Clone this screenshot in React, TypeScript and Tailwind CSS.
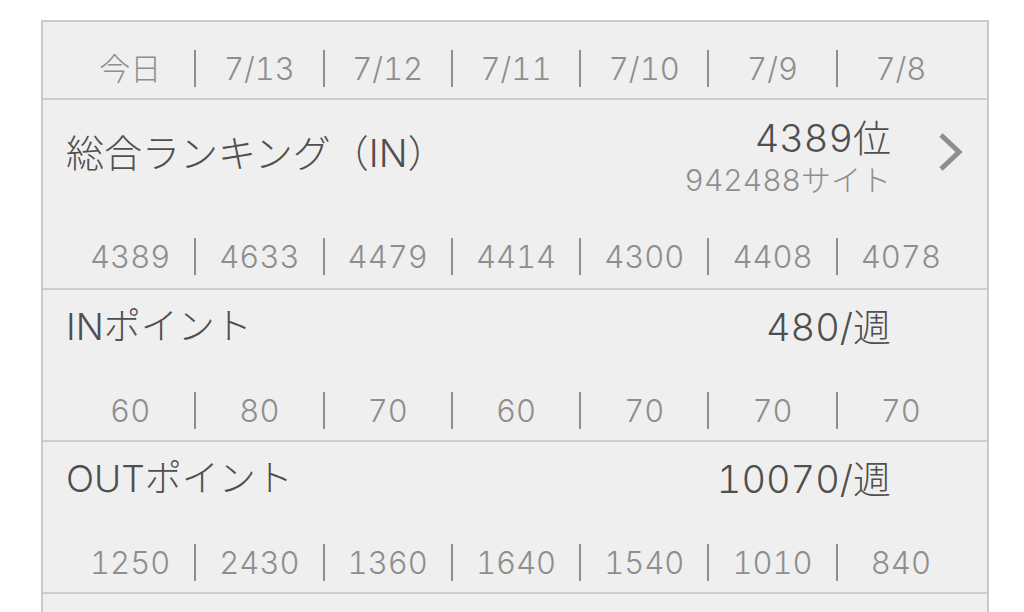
const dates = ['今日', '7/13', '7/12', '7/11', '7/10', '7/9', '7/8'];

const points = [
  {
    title: 'INポイント',
    value: '480/週',
    history: ['60', '80', '70', '60', '70', '70', '70'],
  },
  {
    title: 'OUTポイント',
    value: '10070/週',
    history: ['1250', '2430', '1360', '1640', '1540', '1010', '840'],
  },
];

const rankHistory = ['4389', '4633', '4479', '4414', '4300', '4408', '4078'];

function HistoryCells({ items }: { items: string[] }) {
  return (
    <div className="grid grid-cols-7 px-[23px]">
      {items.map((v, i) => (
        <div
          key={i}
          className={
            i > 0
              ? 'flex h-[37px] items-center justify-center border-l-2 border-[#8e8e8e] text-[31px] leading-none text-[#8e8e8e]'
              : 'flex h-[37px] items-center justify-center text-[31px] leading-none text-[#8e8e8e]'
          }
        >
          {v}
        </div>
      ))}
    </div>
  );
}

function Chevron() {
  return (
    <svg width="26" height="40" viewBox="0 0 26 40" className="block">
      <polyline
        points="4,3 22,20 4,37"
        fill="none"
        stroke="#8e8e8e"
        strokeWidth="5"
        strokeLinejoin="miter"
      />
    </svg>
  );
}

export default function App() {
  return (
    <div className="h-[612px] overflow-hidden bg-white pt-[20px] pl-[41px] font-[Inter,'Noto_Sans_CJK_JP',sans-serif] font-light tabular-nums">
      <div className="w-[948px] border-2 border-b-0 border-[#cacaca] bg-[#efefef]">
        {/* date header */}
        <div className="border-b-2 border-[#cdcdcd] pt-[28px] pb-[11px]">
          <HistoryCells items={dates} />
        </div>

        {/* overall ranking */}
        <div className="border-b-2 border-[#cdcdcd] pt-[18px] pb-[13px]">
          <div className="flex items-start pl-[23px] pr-[24px]">
            <div className="mt-[13px] flex-1 text-[38px] leading-[44px] text-[#4f4f4f]">
              総合ランキング（IN）
            </div>
            <div className="flex flex-col items-end">
              <div className="text-[38px] leading-[40px] text-[#4f4f4f]">4389位</div>
              <div className="text-[30px] leading-[44px] text-[#8e8e8e]">942488サイト</div>
            </div>
            <div className="mt-[14px] ml-[46px]">
              <Chevron />
            </div>
          </div>
          <div className="mt-[36px]">
            <HistoryCells items={rankHistory} />
          </div>
        </div>

        {points.map((p) => (
          <div key={p.title} className="border-b-2 border-[#cdcdcd] pt-[15px] pb-[11px]">
            <div className="flex items-center pl-[23px] pr-[96px]">
              <div className="flex-1 text-[37px] leading-[44px] text-[#4f4f4f]">{p.title}</div>
              <div className="text-[38px] leading-[44px] text-[#4f4f4f]">{p.value}</div>
            </div>
            <div className="mt-[43px]">
              <HistoryCells items={p.history} />
            </div>
          </div>
        ))}

        <div className="h-[80px]" />
      </div>
    </div>
  );
}
